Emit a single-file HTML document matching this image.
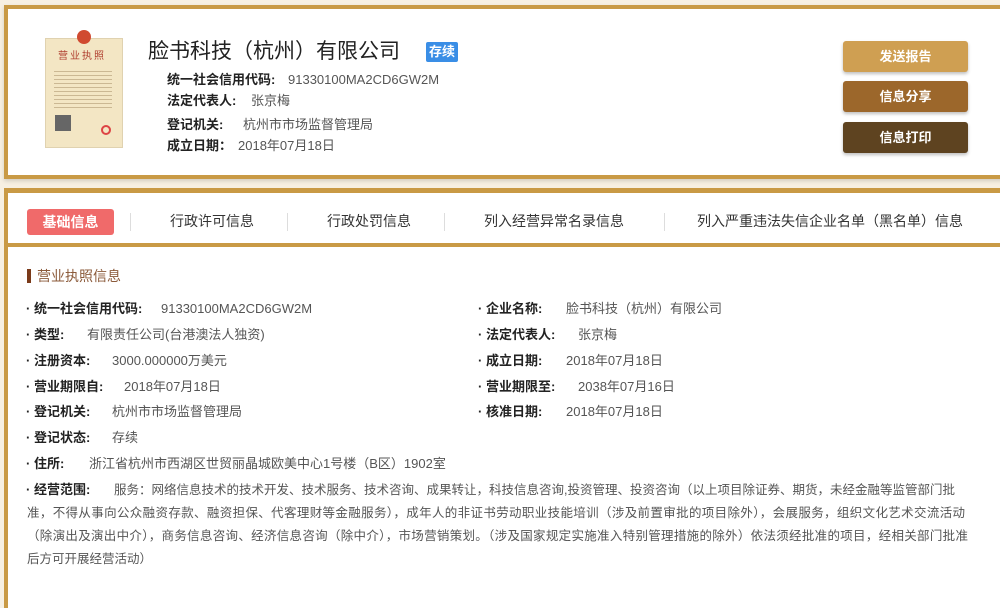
<!DOCTYPE html>
<html><head><meta charset="utf-8"><style>
*{margin:0;padding:0;box-sizing:border-box}
body{width:1000px;height:597px;overflow:hidden;background:#f7f0e2;font-family:"Liberation Sans","Noto Sans CJK SC",sans-serif;color:#333;position:relative}
.a{position:absolute;white-space:nowrap;line-height:18px}
.card1{position:absolute;left:4px;top:5px;width:1000px;height:174px;background:#fff;border:4px solid #c99a45;border-right:none;box-shadow:0 2px 4px rgba(0,0,0,.15)}
.card2{position:absolute;left:4px;top:188px;width:1000px;height:420px;background:#fff;border-top:5px solid #c99a45;border-left:4px solid #c99a45}
.line{position:absolute;left:4px;top:243px;width:996px;height:4px;background:#c99a45}
.btn{position:absolute;left:843px;width:125px;height:31px;border-radius:3px;color:#fff;font-weight:bold;font-size:13px;text-align:center;line-height:31px;box-shadow:0 2px 3px rgba(0,0,0,.25)}
.lab{font-weight:bold;font-size:13px;color:#222}
.val{font-size:13px;color:#555}
.tab{font-size:14px;color:#333;top:212px}
.sep{position:absolute;top:213px;width:1px;height:18px;background:#ddd}
</style></head><body>
<div class="card1"></div>
<div class="a" style="left:45px;top:38px;width:78px;height:110px;background:#f3e6c4;border:1px solid #e0d2b0"></div>
<div class="a" style="left:77px;top:30px;width:14px;height:14px;border-radius:50%;background:#d04a30"></div>
<div class="a" style="left:58px;top:48px;font-size:10px;color:#b04030;letter-spacing:2px">营业执照</div>
<div class="a" style="left:54px;top:68px;width:58px;height:40px;background:repeating-linear-gradient(#f3e6c4 0 3px,#cbb893 3px 4px)"></div>
<div class="a" style="left:55px;top:115px;width:16px;height:16px;background:#666"></div>
<div class="a" style="left:101px;top:125px;width:10px;height:10px;border-radius:50%;border:2px solid #d44"></div>
<div class="a" style="left:148px;top:38px;font-size:21px;line-height:28px;color:#222">脸书科技（杭州）有限公司</div>
<div class="a" style="left:426px;top:42px;width:32px;height:20px;background:#3a8ee6;color:#fff;font-size:13px;font-weight:bold;text-align:center;line-height:20px;border-radius:2px">存续</div>
<div class="a lab" style="left:167px;top:71px">统一社会信用代码:</div><div class="a val" style="left:288px;top:71px">91330100MA2CD6GW2M</div>
<div class="a lab" style="left:167px;top:92px">法定代表人:</div><div class="a val" style="left:251px;top:92px">张京梅</div>
<div class="a lab" style="left:167px;top:116px">登记机关:</div><div class="a val" style="left:243px;top:116px">杭州市市场监督管理局</div>
<div class="a lab" style="left:167px;top:137px">成立日期：</div><div class="a val" style="left:238px;top:137px">2018年07月18日</div>
<div class="btn" style="top:41px;background:#cf9f52">发送报告</div>
<div class="btn" style="top:81px;background:#9c672b">信息分享</div>
<div class="btn" style="top:122px;background:#5e4320">信息打印</div>

<div class="card2"></div>
<div class="line"></div>
<div class="a" style="left:27px;top:209px;width:87px;height:26px;background:#f06a6a;border-radius:3px;color:#fff;font-size:14px;font-weight:bold;text-align:center;line-height:26px">基础信息</div>
<div class="sep" style="left:130px"></div>
<div class="a tab" style="left:170px">行政许可信息</div>
<div class="sep" style="left:287px"></div>
<div class="a tab" style="left:327px">行政处罚信息</div>
<div class="sep" style="left:444px"></div>
<div class="a tab" style="left:484px">列入经营异常名录信息</div>
<div class="sep" style="left:664px"></div>
<div class="a tab" style="left:697px">列入严重违法失信企业名单（黑名单）信息</div>

<div class="a" style="left:27px;top:269px;width:4px;height:14px;background:#7a3a1a"></div>
<div class="a" style="left:37px;top:267px;font-size:14px;color:#8b5a3a">营业执照信息</div>

<div class="a lab" style="left:26px;top:300px">· 统一社会信用代码:</div><div class="a val" style="left:161px;top:300px">91330100MA2CD6GW2M</div>
<div class="a lab" style="left:26px;top:326px">· 类型:</div><div class="a val" style="left:87px;top:326px">有限责任公司(台港澳法人独资)</div>
<div class="a lab" style="left:26px;top:352px">· 注册资本:</div><div class="a val" style="left:112px;top:352px">3000.000000万美元</div>
<div class="a lab" style="left:26px;top:378px">· 营业期限自:</div><div class="a val" style="left:124px;top:378px">2018年07月18日</div>
<div class="a lab" style="left:26px;top:403px">· 登记机关:</div><div class="a val" style="left:112px;top:403px">杭州市市场监督管理局</div>
<div class="a lab" style="left:26px;top:429px">· 登记状态:</div><div class="a val" style="left:112px;top:429px">存续</div>

<div class="a lab" style="left:478px;top:300px">· 企业名称:</div><div class="a val" style="left:566px;top:300px">脸书科技（杭州）有限公司</div>
<div class="a lab" style="left:478px;top:326px">· 法定代表人:</div><div class="a val" style="left:578px;top:326px">张京梅</div>
<div class="a lab" style="left:478px;top:352px">· 成立日期:</div><div class="a val" style="left:566px;top:352px">2018年07月18日</div>
<div class="a lab" style="left:478px;top:378px">· 营业期限至:</div><div class="a val" style="left:578px;top:378px">2038年07月16日</div>
<div class="a lab" style="left:478px;top:403px">· 核准日期:</div><div class="a val" style="left:566px;top:403px">2018年07月18日</div>

<div class="a lab" style="left:26px;top:455px">· 住所:</div><div class="a val" style="left:89px;top:455px">浙江省杭州市西湖区世贸丽晶城欧美中心1号楼（B区）1902室</div>
<div class="a lab" style="left:26px;top:481px">· 经营范围:</div>
<div class="a val" style="left:114px;top:481px;font-size:12.5px">服务：网络信息技术的技术开发、技术服务、技术咨询、成果转让，科技信息咨询,投资管理、投资咨询（以上项目除证券、期货，未经金融等监管部门批</div>
<div class="a val" style="left:27px;top:504px;font-size:12.5px;letter-spacing:0.35px">准，不得从事向公众融资存款、融资担保、代客理财等金融服务），成年人的非证书劳动职业技能培训（涉及前置审批的项目除外），会展服务，组织文化艺术交流活动</div>
<div class="a val" style="left:27px;top:527px;font-size:12.5px;letter-spacing:0.3px">（除演出及演出中介），商务信息咨询、经济信息咨询（除中介），市场营销策划。（涉及国家规定实施准入特别管理措施的除外）依法须经批准的项目，经相关部门批准</div>
<div class="a val" style="left:27px;top:550px;font-size:12.5px">后方可开展经营活动）</div>
</body></html>
